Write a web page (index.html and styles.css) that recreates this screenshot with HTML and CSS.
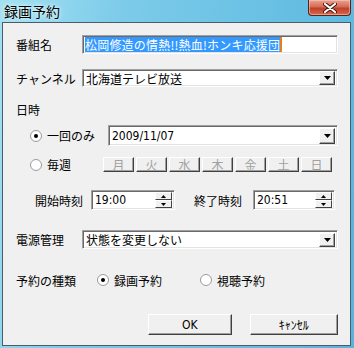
FILE: index.html
```html
<!DOCTYPE html>
<html lang="ja">
<head>
    <meta charset="UTF-8">
    <title>録画予約</title>
    <link rel="stylesheet" href="styles.css">
</head>
<body>

    <div class="window">
        <div class="titlebar">
            <span class="title">録画予約</span>
            <div class="close-btn">
                <svg width="14" height="10" viewBox="0 0 14 10">
                    <path d="M2 1 L12 9 M12 1 L2 9" stroke="#3a1610" stroke-width="4" stroke-linecap="round"/>
                    <path d="M2 1 L12 9 M12 1 L2 9" stroke="#ffffff" stroke-width="2.2" stroke-linecap="round"/>
                </svg>
            </div>
        </div>

        <div class="client">
            <div class="row row-name">
                <span class="label">番組名</span>
                <div class="field grow">
                    <span class="selected">松岡修造の情熱!!熱血!ホンキ応援団</span><span class="caret"></span>
                </div>
            </div>

            <div class="row row-channel">
                <span class="label">チャンネル</span>
                <div class="field combo grow">
                    <span class="combo-text">北海道テレビ放送</span>
                    <span class="drop"><svg width="7" height="4" viewBox="0 0 7 4"><path d="M0 0 H7 L3.5 4 Z" fill="#000"/></svg></span>
                </div>
            </div>

            <div class="heading">日時</div>

            <div class="row row-once">
                <label class="radio-item once">
                    <svg class="radio" width="12" height="12" viewBox="0 0 12 12">
                        <circle cx="6" cy="6" r="5.5" fill="#fff" stroke="#9a9a9a"/>
                        <circle cx="6" cy="6" r="2" fill="#000"/>
                    </svg>
                    <span>一回のみ</span>
                </label>
                <div class="field combo date grow">
                    <span class="combo-text narrow">2009/11/07</span>
                    <span class="drop"><svg width="7" height="4" viewBox="0 0 7 4"><path d="M0 0 H7 L3.5 4 Z" fill="#000"/></svg></span>
                </div>
            </div>

            <div class="row row-weekly">
                <label class="radio-item weekly">
                    <svg class="radio" width="12" height="12" viewBox="0 0 12 12">
                        <circle cx="6" cy="6" r="5.5" fill="#fff" stroke="#9a9a9a"/>
                    </svg>
                    <span>毎週</span>
                </label>
                <div class="days">
                    <span class="day">月</span>
                    <span class="day">火</span>
                    <span class="day">水</span>
                    <span class="day">木</span>
                    <span class="day">金</span>
                    <span class="day">土</span>
                    <span class="day">日</span>
                </div>
            </div>

            <div class="row row-time">
                <span class="time-label">開始時刻</span>
                <div class="field spin start">
                    <span class="combo-text narrow">19:00</span>
                    <span class="spin-btns">
                        <span class="spin-btn"><svg width="5" height="3" viewBox="0 0 5 3"><path d="M0 3 H5 L2.5 0 Z" fill="#000"/></svg></span>
                        <span class="spin-btn"><svg width="5" height="3" viewBox="0 0 5 3"><path d="M0 0 H5 L2.5 3 Z" fill="#000"/></svg></span>
                    </span>
                </div>
                <span class="time-label end">終了時刻</span>
                <div class="field spin finish">
                    <span class="combo-text narrow">20:51</span>
                    <span class="spin-btns">
                        <span class="spin-btn"><svg width="5" height="3" viewBox="0 0 5 3"><path d="M0 3 H5 L2.5 0 Z" fill="#000"/></svg></span>
                        <span class="spin-btn"><svg width="5" height="3" viewBox="0 0 5 3"><path d="M0 0 H5 L2.5 3 Z" fill="#000"/></svg></span>
                    </span>
                </div>
            </div>

            <div class="row row-power">
                <span class="label">電源管理</span>
                <div class="field combo grow">
                    <span class="combo-text">状態を変更しない</span>
                    <span class="drop"><svg width="7" height="4" viewBox="0 0 7 4"><path d="M0 0 H7 L3.5 4 Z" fill="#000"/></svg></span>
                </div>
            </div>

            <div class="row row-type">
                <span class="label wide">予約の種類</span>
                <label class="radio-item plain">
                    <svg class="radio" width="12" height="12" viewBox="0 0 12 12">
                        <circle cx="6" cy="6" r="5.5" fill="#fff" stroke="#9a9a9a"/>
                        <circle cx="6" cy="6" r="2" fill="#000"/>
                    </svg>
                    <span>録画予約</span>
                </label>
                <label class="radio-item plain second">
                    <svg class="radio" width="12" height="12" viewBox="0 0 12 12">
                        <circle cx="6" cy="6" r="5.5" fill="#fff" stroke="#9a9a9a"/>
                    </svg>
                    <span>視聴予約</span>
                </label>
            </div>

            <div class="row row-buttons">
                <span class="push ok">OK</span>
                <span class="push cancel">ｷｬﾝｾﾙ</span>
            </div>
        </div>
    </div>

</body>
</html>
```

FILE: styles.css
```css
/* Page */
body {
    margin: 0;
    padding: 0;
    font-family: 'Noto Sans CJK JP', 'DejaVu Sans', sans-serif;
    font-size: 12px;
    color: #000;
}

/* Aero window frame */
.window {
    width: 354px;
    height: 348px;
    box-sizing: border-box;
    background: linear-gradient(100deg, #a3e1f2 0%, #7ccbe9 30%, #66bfe3 70%, #5ab3db 100%);
    display: flex;
    flex-direction: column;
}

.titlebar {
    height: 22px;
    display: flex;
    justify-content: space-between;
    align-items: flex-start;
}

.title {
    font-size: 14px;
    line-height: 18px;
    margin: 2px 0 0 4px;
    color: #000;
    text-shadow: 0 0 6px #e8fbff, 0 0 3px #e8fbff;
}

.close-btn {
    width: 43px;
    height: 16px;
    margin-right: 3px;
    box-sizing: border-box;
    border: 1px solid #5a2218;
    border-top: none;
    border-radius: 0 0 4px 4px;
    background: linear-gradient(#e9a493 0%, #d66a55 45%, #c1402a 55%, #d26a4e 100%);
    box-shadow: inset 0 0 0 1px rgba(255, 210, 200, 0.5);
    display: flex;
    justify-content: center;
    align-items: center;
}

/* Dialog client area */
.client {
    flex: none;
    height: 324px;
    margin: 0 3px 0 2px;
    box-sizing: border-box;
    border: 1px solid #4c5d6a;
    background-color: #f0f0f0;
    padding: 12px 12px 0 13px;
}

.row {
    display: flex;
    align-items: center;
}

.label {
    width: 66px;
    flex: none;
    white-space: nowrap;
}

.label.wide {
    width: 81px;
}

.grow {
    flex: 1;
}

/* Sunken edit/combo fields */
.field {
    box-sizing: border-box;
    height: 100%;
    background-color: #fff;
    border: 1px solid;
    border-color: #a0a0a0 #ffffff #ffffff #a0a0a0;
    box-shadow: inset 1px 1px 0 #696969, inset -1px -1px 0 #e3e3e3;
    display: flex;
    align-items: center;
    padding: 0 2px 0 2px;
    white-space: nowrap;
    overflow: hidden;
}

.selected {
    background-color: #3399ff;
    color: #fff;
    line-height: 15px;
    letter-spacing: 0.2px;
}

.caret {
    width: 2px;
    height: 15px;
    background-color: #e87d1e;
}

.combo {
    justify-content: space-between;
    padding-right: 2px;
}

.combo-text {
    padding-left: 1px;
}

.narrow {
    font-family: 'Liberation Sans Narrow', 'DejaVu Sans Condensed', sans-serif;
    font-size: 12px;
}

.drop {
    width: 16px;
    height: 14px;
    flex: none;
    box-sizing: border-box;
    background-color: #f0f0f0;
    border: 1px solid;
    border-color: #ffffff #404040 #404040 #ffffff;
    box-shadow: inset -1px -1px 0 #a0a0a0;
    display: flex;
    justify-content: center;
    align-items: center;
}

.date .drop {
    height: 16px;
}

/* Rows and their heights */
.row-name {
    height: 19px;
}

.row-channel {
    height: 18px;
    margin-top: 15px;
}

.heading {
    height: 14px;
    line-height: 14px;
    margin-top: 16px;
}

.row-once {
    height: 21px;
    margin-top: 8px;
}

.row-weekly {
    height: 15px;
    margin-top: 11px;
}

.row-time {
    height: 20px;
    margin-top: 18px;
}

.row-power {
    height: 19px;
    margin-top: 20px;
}

.row-type {
    height: 18px;
    margin-top: 22px;
}

.row-buttons {
    height: 21px;
    margin-top: 25px;
    padding-left: 132px;
    gap: 18px;
}

/* Radio buttons */
.radio-item {
    display: flex;
    align-items: center;
    gap: 5px;
    padding-left: 14px;
    box-sizing: border-box;
    flex: none;
    white-space: nowrap;
}

.radio-item.once {
    width: 92px;
}

.radio-item.weekly {
    width: 87px;
}

.radio-item.plain {
    width: auto;
    padding-left: 0;
}

.radio-item.second {
    margin-left: 38px;
}

.radio {
    flex: none;
}

/* Weekday buttons (disabled) */
.days {
    display: flex;
    gap: 2px;
    height: 100%;
}

.day {
    width: 31px;
    height: 100%;
    box-sizing: border-box;
    background-color: #f0f0f0;
    border: 1px solid;
    border-color: #ffffff #404040 #404040 #ffffff;
    box-shadow: inset -1px -1px 0 #a0a0a0;
    color: #a0a0a0;
    display: flex;
    justify-content: center;
    align-items: center;
    line-height: 12px;
}

/* Time fields with spin buttons */
.time-label {
    margin-left: 19px;
    width: 56px;
    flex: none;
    white-space: nowrap;
}

.time-label.end {
    width: 59px;
}

.spin {
    justify-content: space-between;
    padding-right: 2px;
}

.spin.start {
    width: 84px;
}

.spin.finish {
    width: 82px;
}

.spin-btns {
    display: flex;
    flex-direction: column;
    width: 17px;
    height: 16px;
}

.spin-btn {
    flex: 1;
    box-sizing: border-box;
    background-color: #f0f0f0;
    border: 1px solid;
    border-color: #ffffff #404040 #404040 #ffffff;
    display: flex;
    justify-content: center;
    align-items: center;
}

/* Push buttons */
.push {
    height: 100%;
    box-sizing: border-box;
    background-color: #f0f0f0;
    border: 1px solid;
    border-color: #ffffff #404040 #404040 #ffffff;
    box-shadow: inset -1px -1px 0 #a0a0a0;
    display: flex;
    justify-content: center;
    align-items: center;
}

.push.ok {
    width: 84px;
    font-family: 'Liberation Sans Narrow', 'DejaVu Sans Condensed', sans-serif;
}

.push.cancel {
    width: 89px;
}
```
